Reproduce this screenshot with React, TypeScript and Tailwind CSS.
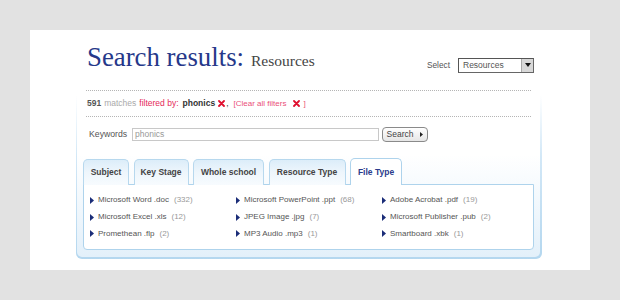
import React from 'react';

const sans = { fontFamily: '"Liberation Sans", Arial, sans-serif' };

const tabs: [string, string][] = [
  ['Subject', 'w-[46px]'],
  ['Key Stage', 'w-[55px]'],
  ['Whole school', 'w-[71px]'],
  ['Resource Type', 'w-[77px]'],
  ['File Type', 'w-[52px]'],
];

const columns: [string, number][][] = [
  [
    ['Microsoft Word .doc', 332],
    ['Microsoft Excel .xls', 12],
    ['Promethean .flp', 2],
  ],
  [
    ['Microsoft PowerPoint .ppt', 68],
    ['JPEG Image .jpg', 7],
    ['MP3 Audio .mp3', 1],
  ],
  [
    ['Adobe Acrobat .pdf', 19],
    ['Microsoft Publisher .pub', 2],
    ['Smartboard .xbk', 1],
  ],
];

const RedX = () => (
  <svg width="7" height="7" viewBox="0 0 7 7" className="inline-block">
    <path d="M1 1 L6 6 M6 1 L1 6" stroke="#e0102f" strokeWidth="1.8" strokeLinecap="round" />
  </svg>
);

const Bullet = () => (
  <svg width="4" height="7" viewBox="0 0 4 7" className="shrink-0">
    <path d="M0 0 L4 3.5 L0 7 Z" fill="#1b2d78" />
  </svg>
);

const App: React.FC = () => {
  return (
    <div className="w-[620px] h-[300px] bg-[#e2e2e2] p-[30px]" style={sans}>
      <div className="bg-white h-[240px] pt-[16px]">
        {/* heading */}
        <div className="flex items-center justify-between pl-[57px] pr-[56px] h-[26px]">
          <h1 className="leading-[26px] text-[#26388a]" style={{ fontFamily: '"Liberation Serif", "Times New Roman", serif' }}>
            <span className="text-[26.8px]">Search results:</span>
            <span className="text-[15.5px] text-[#444] ml-[7px]">Resources</span>
          </h1>
          <div className="flex items-center gap-[8px] mt-[12px]">
            <span className="text-[8.3px] text-[#555]">Select</span>
            <div className="flex w-[76px] h-[15px] border border-[#666] border-t-[#555] border-l-[#555] bg-white">
              <span className="flex-1 text-[8.5px] leading-[13px] text-[#555] pl-[4px]">Resources</span>
              <div className="w-[12px] flex items-center justify-center bg-[#d8d8d8] border-l border-[#aaa]">
                <svg width="6" height="4" viewBox="0 0 6 4">
                  <path d="M0 0 L6 0 L3 4 Z" fill="#111" />
                </svg>
              </div>
            </div>
          </div>
        </div>

        {/* results box */}
        <div className="ml-[46px] mr-[48px] mt-[14px] rounded-b-[6px] bg-linear-to-b from-white from-[5%] via-[#d3e8f7] via-40% to-[#b4d7ef] pl-px pr-[2px] pb-[2px]">
          <div className="rounded-b-[5px] bg-linear-to-b from-white from-[40%] to-[#e3f0fa] pt-[4px] pb-[7px]">
            <div className="mx-[9px] h-[27px] border-y border-dotted border-[#b5b5b5] flex items-center gap-[3px] text-[8.5px] pl-px">
              <b className="text-[#555]">591</b>
              <span className="text-[#aaa]">matches</span>
              <span className="text-[#e52a5a]">filtered by:</span>
              <b className="text-[#333] ml-[1px]">phonics</b>
              <RedX />
              <span className="text-[#333] -ml-[2px]">,</span>
              <span className="text-[#ea4f78] text-[8px] ml-[2px]">[Clear all filters</span>
              <span className="ml-[4px]"><RedX /></span>
              <span className="text-[#ea4f78] text-[8px]">]</span>
            </div>

            <div className="flex items-center mx-[9px] mt-[10px] h-[15px] pl-[3px]">
              <span className="text-[8.7px] text-[#555] w-[43px]">Keywords</span>
              <div className="w-[247px] h-[13px] border border-[#c8c8c8] text-[8.5px] leading-[11px] text-[#999] pl-[2px]">phonics</div>
              <button className="ml-[3px] h-[15px] w-[46px] rounded-[4px] border border-[#8a8a8a] bg-linear-to-b from-white to-[#e6e6e6] flex items-center justify-center gap-[7px] text-[8.5px] text-[#444]">
                Search
                <svg width="3" height="5" viewBox="0 0 3 5">
                  <path d="M0 0 L3 2.5 L0 5 Z" fill="#222" />
                </svg>
              </button>
            </div>

            <div className="mx-[6px] mt-[16px]">
              <div className="flex gap-[4.5px] relative z-10">
                {tabs.map(([t, w]) => {
                  const active = t === 'File Type';
                  return (
                    <div
                      key={t}
                      className={`${w} rounded-t-[5px] border border-b-0 flex items-center justify-center text-[8.5px] font-bold ${
                        active
                          ? 'h-[27px] bg-white border-[#aed3ec] text-[#2b3c8c]'
                          : 'bg-linear-to-b from-[#dcedf9] via-[#eef6fc] to-[#f7fbfe] border-[#b7d8ee] text-[#444] h-[26px] mt-[1px] border-b'
                      }`}
                    >
                      {t}
                    </div>
                  );
                })}
              </div>
              <div className="-mt-px border border-[#aed3ec] bg-white rounded-b-[4px] h-[66px] pt-[7px] pl-[6px] grid grid-cols-[146px_146px_1fr]">
                {columns.map((col, i) => (
                  <div key={i} className="flex flex-col">
                    {col.map(([name, n]) => (
                      <div key={name} className="flex items-center h-[16.7px] text-[8px]">
                        <Bullet />
                        <span className="ml-[4px] text-[#555]">{name}</span>
                        <span className="ml-[5px] text-[#999]">({n})</span>
                      </div>
                    ))}
                  </div>
                ))}
              </div>
            </div>
          </div>
        </div>
      </div>
    </div>
  );
};

export default App;
